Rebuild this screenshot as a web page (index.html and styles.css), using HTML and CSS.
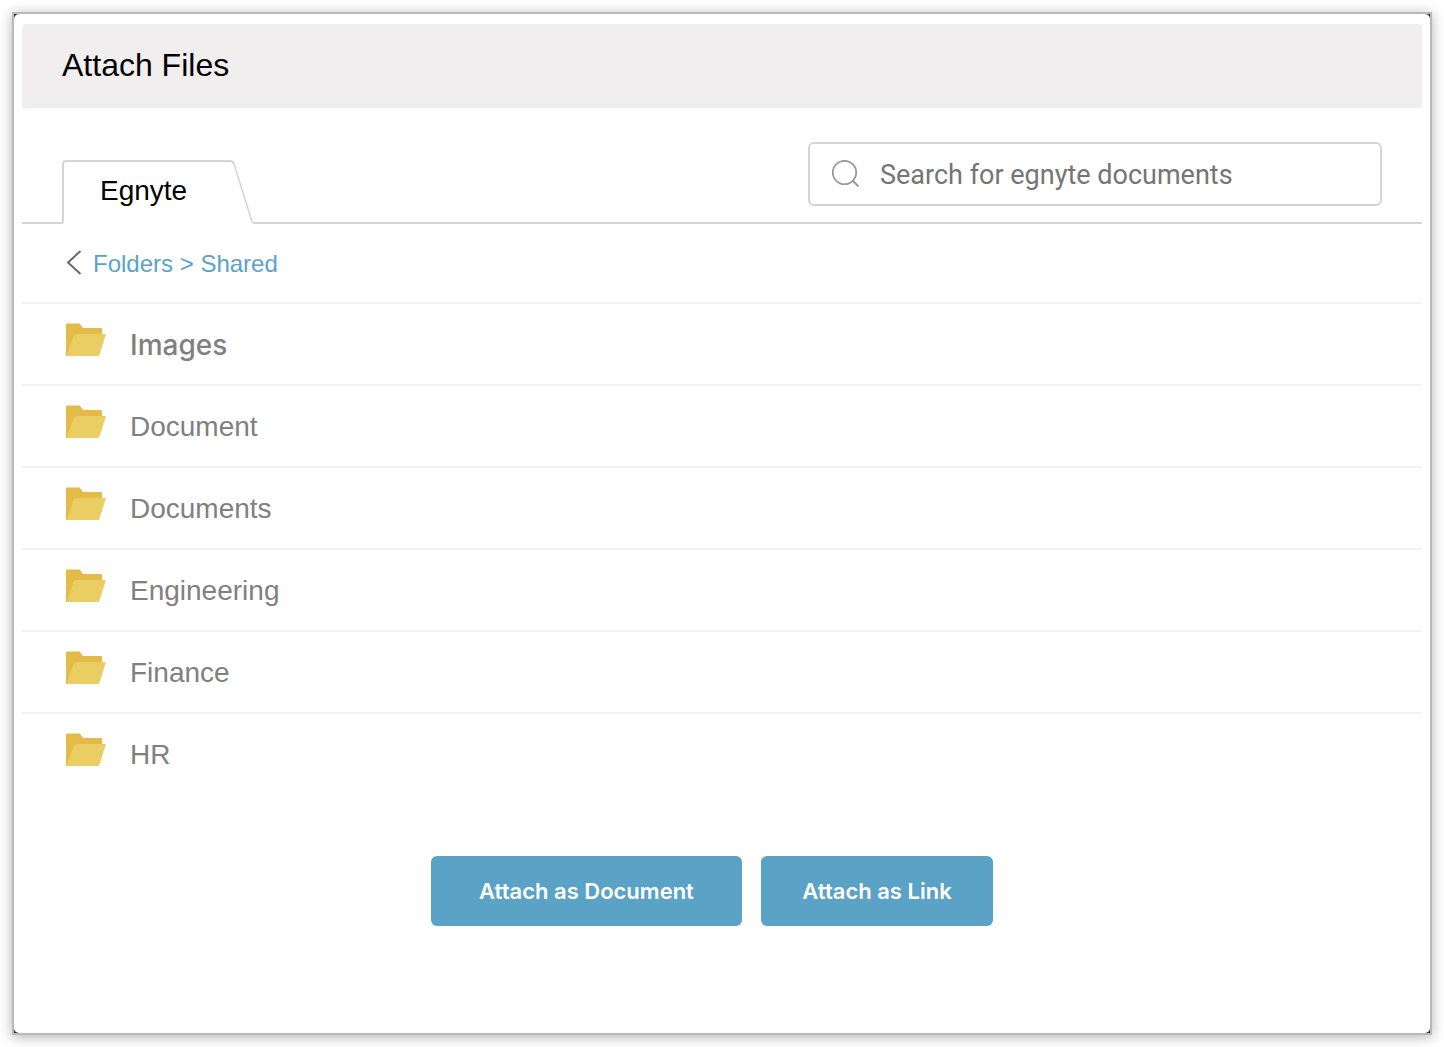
FILE: index.html
```html
<!DOCTYPE html>
<html lang="en">
<head>
<meta charset="utf-8">
<title>Attach Files</title>
<link rel="stylesheet" href="styles.css">
</head>
<body>
<svg class="symbols" aria-hidden="true">
  <symbol id="folder" viewBox="0 0 40 34">
    <path fill="#e4ba48" d="M0 1.500Q0 .5 1 .5H13Q14 .5 14.500 1.500L17 5H35Q36 5 36 6V20L20 33H0Z"/>
    <path fill="#eace63" d="M.5 33 7.500 13Q8.200 11 10.500 11H40L33.500 31.500Q33 33 31.500 33Z"/>
  </symbol>
</svg>
<main class="frame">
  <div class="dialog">
    <header class="header"><h1 class="title">Attach Files</h1></header>
    <div class="toolbar">
      <button class="tab" type="button">
        <svg class="tab-shape" viewBox="0 0 192 64" aria-hidden="true">
          <path fill="#fff" d="M1 64V4Q1 1 4 1H168Q171 1 172 4L190 60Q191 63 192 64Z"/>
          <path fill="none" stroke="#d5d5d5" stroke-width="2" d="M0 63Q1 63 1 61V4Q1 1 4 1H168Q171 1 172 4"/>
          <path fill="none" stroke="#d5d5d5" stroke-width="1.500" d="M172 4 189.500 60Q190.500 63 192 63"/>
        </svg>
        <span class="tab-label">Egnyte</span>
      </button>
      <label class="search">
        <svg class="search-icon" viewBox="0 0 28 28" fill="none" stroke="#999" stroke-width="1.800" aria-hidden="true"><circle cx="12.500" cy="12.500" r="11.700"/><path d="M20.500 20.500 26.500 26.500"/></svg>
        <input class="search-input" type="search" placeholder="Search for egnyte documents" aria-label="Search for egnyte documents">
      </label>
    </div>
    <nav class="crumbs" aria-label="Folder path">
      <a class="crumb-link" href="#folders">
        <svg class="back-icon" viewBox="0 0 16 28" fill="none" stroke="#6b6b6b" stroke-width="2" aria-hidden="true"><path d="M14.500 1 2 12.500 14.500 24"/></svg>
        <span>Folders &gt; Shared</span>
      </a>
    </nav>
    <ul class="folders">
      <li class="row"><a class="folder" href="#images"><svg class="folder-icon" aria-hidden="true"><use href="#folder"/></svg><span class="name name-alt">Images</span></a></li>
      <li class="row"><a class="folder" href="#document"><svg class="folder-icon" aria-hidden="true"><use href="#folder"/></svg><span class="name">Document</span></a></li>
      <li class="row"><a class="folder" href="#documents"><svg class="folder-icon" aria-hidden="true"><use href="#folder"/></svg><span class="name">Documents</span></a></li>
      <li class="row"><a class="folder" href="#engineering"><svg class="folder-icon" aria-hidden="true"><use href="#folder"/></svg><span class="name">Engineering</span></a></li>
      <li class="row"><a class="folder" href="#finance"><svg class="folder-icon" aria-hidden="true"><use href="#folder"/></svg><span class="name">Finance</span></a></li>
      <li class="row"><a class="folder" href="#hr"><svg class="folder-icon" aria-hidden="true"><use href="#folder"/></svg><span class="name">HR</span></a></li>
    </ul>
    <div class="actions">
      <button class="action action-wide" type="button">Attach as Document</button>
      <button class="action" type="button">Attach as Link</button>
    </div>
  </div>
</main>
</body>
</html>
```
FILE: styles.css
```css
* { box-sizing: border-box; }

body {
  margin: 0;
  padding: 12px;
  min-height: 100vh;
  display: flex;
  background: #fff;
  font-family: "Liberation Sans", Arial, sans-serif;
}

.symbols { position: absolute; width: 0; height: 0; }

.frame {
  flex: 1;
  display: flex;
  border: 2px solid #b9b9b9;
  background: #333;
  box-shadow: 0 2px 12px rgba(0, 0, 0, 0.3);
}

.dialog {
  flex: 1;
  padding: 10px 8px;
  border-radius: 5px;
  background: #fff;
}

.header {
  padding: 19px 40px 21px;
  border-radius: 4px 4px 0 0;
  background: #f0eeef;
}

.title {
  margin: 0;
  font-size: 32px;
  line-height: 44px;
  font-weight: 400;
  color: #000;
}

.toolbar {
  display: flex;
  justify-content: space-between;
  align-items: flex-end;
  padding: 34px 40px 0;
  border-bottom: 2px solid #d5d5d5;
}

.tab {
  position: relative;
  width: 192px;
  height: 64px;
  margin: 0 0 -2px;
  padding: 0 0 2px 38px;
  border: 0;
  background: none;
  font: 28px/32px "Liberation Sans", Arial, sans-serif;
  text-align: left;
  color: #000;
}

.tab-shape { position: absolute; inset: 0; width: 100%; height: 100%; }
.tab-label { position: relative; }

.search {
  display: flex;
  align-items: center;
  gap: 20px;
  width: 574px;
  height: 64px;
  margin-bottom: 16px;
  padding: 0 22px;
  border: 2px solid #d5d5d5;
  border-radius: 6px;
}

.search-icon { flex: none; width: 28px; height: 28px; }

.search-input {
  flex: 1;
  min-width: 0;
  padding: 2px 0 0;
  border: 0;
  outline: 0;
  background: none;
  font: 27px/32px Roboto, "Liberation Sans", sans-serif;
  color: #333;
}

.search-input::placeholder { color: #757575; opacity: 1; }

.crumbs {
  padding: 20px 44px 18px;
}

.crumb-link {
  display: inline-flex;
  align-items: center;
  gap: 11px;
  height: 40px;
  font-size: 24px;
  line-height: 40px;
  color: #5ba2c7;
  text-decoration: none;
}

.back-icon { width: 16px; height: 28px; }

.folders { margin: 0; padding: 0; list-style: none; }
.row { border-top: 2px solid #f4f1f2; }

.folder {
  display: flex;
  align-items: flex-start;
  gap: 24px;
  padding: 19px 44px 17px;
  color: #808080;
  text-decoration: none;
}

.folder-icon { width: 40px; height: 34px; }
.name { font-size: 28px; line-height: 44px; }
.name-alt { font-family: Inter, sans-serif; font-weight: 500; }

.actions {
  display: flex;
  justify-content: center;
  gap: 19px;
  padding: 62px 20px 96px 0;
}

.action {
  width: 232px;
  height: 70px;
  padding: 0;
  border: 0;
  border-radius: 6px;
  background: #5ba2c7;
  font: 600 22px/32px Inter, sans-serif;
  color: #fff;
}

.action-wide { width: 311px; }
```
